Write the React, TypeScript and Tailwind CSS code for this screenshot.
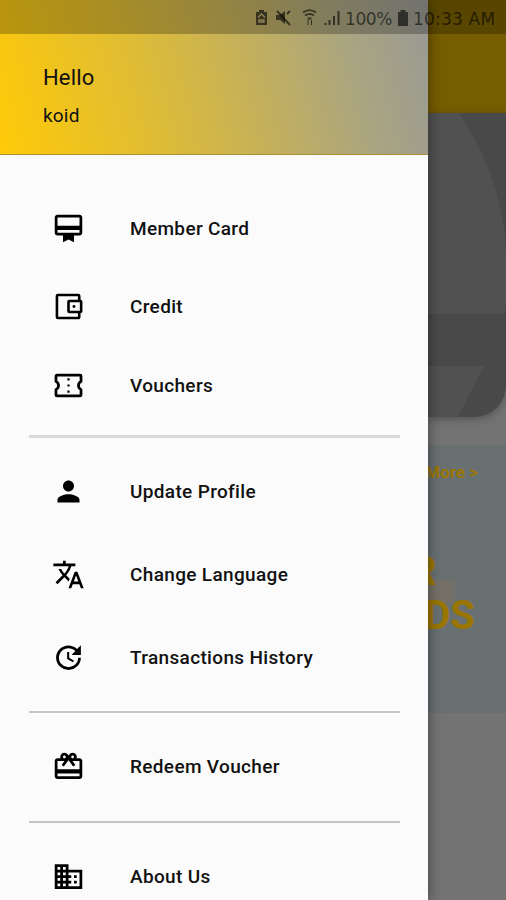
import { ReactNode } from "react";
import { MdCardMembership, MdPerson, MdTranslate, MdUpdate, MdCardGiftcard, MdBusiness } from "react-icons/md";

function WalletIcon() {
  return (
    <svg viewBox="0 0 24 24" width="33" height="33" fill="none" stroke="currentColor" strokeWidth="1.9" strokeLinejoin="round">
      <path d="M19.800 7.500V4.300a.7.7 0 0 0-.7-.7H4.300a.7.7 0 0 0-.7.7v15.400c0 .4.3.7.7.7h14.800a.7.7 0 0 0 .7-.7v-3.200" />
      <rect x="12" y="8" width="9.2" height="8" rx=".6" />
      <circle cx="16" cy="12" r="1.05" fill="currentColor" stroke="none" />
    </svg>
  );
}

function TicketIcon() {
  return (
    <svg viewBox="0 0 24 24" width="33" height="33" fill="none" stroke="currentColor" strokeWidth="2" strokeLinejoin="round">
      <path d="M3.600 3.900h16.800a.7.7 0 0 1 .7.700v4.200a3.700 3.700 0 0 0 0 6.400v4.200a.7.7 0 0 1-.7.700H3.600a.7.7 0 0 1-.7-.700v-4.200a3.700 3.700 0 0 0 0-6.400V4.600a.7.7 0 0 1 .7-.700z" transform="matrix(1 0 0 .93 0 .840)" />
      <path d="M11.200 6.800h1.600v1.600h-1.600zM11.200 11.200h1.600v1.600h-1.600zM11.200 15.600h1.600v1.600h-1.600z" fill="currentColor" stroke="none" />
    </svg>
  );
}

function Item({ icon, label, height }: { icon: ReactNode; label: string; height: string }) {
  return (
    <div className={`flex shrink-0 items-center pl-[51.5px] ${height}`}>
      <span className="flex w-[78.5px] shrink-0 pb-px text-[33px] text-black">{icon}</span>
      <span className="whitespace-nowrap text-[19px] font-medium leading-6 tracking-[0.34px]">{label}</span>
    </div>
  );
}

function StatusBar() {
  return (
    <div className="absolute inset-x-0 top-0 h-[34px] bg-black/25 text-black/60">
      <svg className="h-[34px] w-full" viewBox="0 0 506 34" fill="none">
        <path d="M256 12h3v-2h5v2h3v13h-11z" fill="currentColor" />
        <path d="M258 17.500l3.500-3.500 3.500 3.500M259 20h5v2h-5z" stroke="#8f8355" strokeWidth="1.300" />
        <path d="M276 15h4l5-4v13l-5-4h-4z" fill="currentColor" />
        <path d="M277 11l13 14M287 14l3-3" stroke="currentColor" strokeWidth="2" />
        <g stroke="currentColor">
          <path d="M303 12.500c4-3 9-3 13 0M305 15.500c3-2 6-2 9 0M307.500 18.500h4" strokeWidth="1.800" />
          <path d="M308 20v5M311.500 20v5" strokeWidth="1" />
          <path d="M325.500 23v2M329.500 20v5M334 16v9M338.500 11v14" strokeWidth="2" />
        </g>
        <path d="M398 12h2.500v-2h5v2h2.500v14h-10z" fill="currentColor" />
      </svg>
      <span className="absolute left-[345px] top-[9px] font-['DejaVu_Sans',sans-serif] text-[17px] leading-5 tracking-[-0.4px]">100%</span>
      <span className="absolute left-[413px] top-[9px] whitespace-nowrap font-['DejaVu_Sans',sans-serif] text-[17px] leading-5 tracking-[0.2px]">10:33 AM</span>
    </div>
  );
}

function Drawer() {
  return (
    <aside className="relative z-10 flex h-full w-[428px] shrink-0 flex-col overflow-hidden bg-[#fbfbfb] shadow-[0_0_12px_rgba(0,0,0,0.45)]">
      <header className="flex h-[155px] shrink-0 flex-col border-b border-[#a99036] bg-[linear-gradient(75deg,#ffca08_0%,#e1bd32_32%,#c4b05b_58%,#aaa580_80%,#999995_100%)] pl-[43px] pt-[65px]">
        <span className="text-[22px] leading-[26px] tracking-[0.15px]">Hello</span>
        <span className="mt-[13px] text-[19px] leading-6 tracking-[0.2px]">koid</span>
      </header>
      <nav className="flex flex-col pt-[34px]">
        <Item height="h-[79px]" icon={<MdCardMembership />} label="Member Card" />
        <Item height="h-[78px]" icon={<WalletIcon />} label="Credit" />
        <Item height="h-[79px]" icon={<TicketIcon />} label="Vouchers" />
        <div className="ml-[29px] mt-[10px] h-[3px] w-[371px] bg-[#d8d8d8]" />
        <div className="h-[12px]" />
        <Item height="h-[83px]" icon={<MdPerson />} label="Update Profile" />
        <Item height="h-[83px]" icon={<MdTranslate />} label="Change Language" />
        <Item height="h-[83px]" icon={<MdUpdate />} label="Transactions History" />
        <div className="ml-[29px] mt-[12px] h-[2px] w-[371px] bg-[#c5c5c5]" />
        <Item height="h-[108px]" icon={<MdCardGiftcard />} label="Redeem Voucher" />
        <div className="ml-[29px] h-[2px] w-[371px] bg-[#c5c5c5]" />
        <Item height="h-[107px]" icon={<MdBusiness />} label="About Us" />
      </nav>
    </aside>
  );
}

function Backdrop() {
  return (
    <main className="flex w-[78px] shrink-0 flex-col bg-[#747373]">
      <div className="h-[113px] shrink-0 bg-[#765d00]" />
      <div className="h-[304px] shrink-0 overflow-hidden rounded-br-[32px] bg-[#494949] shadow-[0_2px_8px_rgba(0,0,0,0.3)]">
        <svg width="78" height="304" viewBox="0 0 78 304">
          <path d="M0 0h31C56 38 75 82 78 138v54q0 9-5 9H0z" fill="#515151" />
          <path d="M0 253h56L30 304H0z" fill="#515151" />
        </svg>
      </div>
      <div className="mt-[28px] flex h-[268px] shrink-0 flex-col items-end bg-[#697071] font-bold text-[#9a7600]">
        <span className="mr-[28px] mt-[15px] whitespace-nowrap text-[17px] leading-6">More &gt;</span>
        <div className="relative mt-[66px] flex w-full flex-col text-[40px] leading-[44px]">
          <span className="absolute left-0 top-[30px] h-[23px] w-[27px] bg-[#7b7064]/70" />
          <span className="relative -ml-[17px]">R</span>
          <span className="relative mr-[31px] self-end">DS</span>
        </div>
      </div>
    </main>
  );
}

export default function App() {
  return (
    <div className="relative flex h-[900px] w-[506px] overflow-hidden font-['Roboto',sans-serif] text-[#111]">
      <Drawer />
      <Backdrop />
      <div className="absolute inset-0 z-20 h-[34px]">
        <StatusBar />
      </div>
    </div>
  );
}
